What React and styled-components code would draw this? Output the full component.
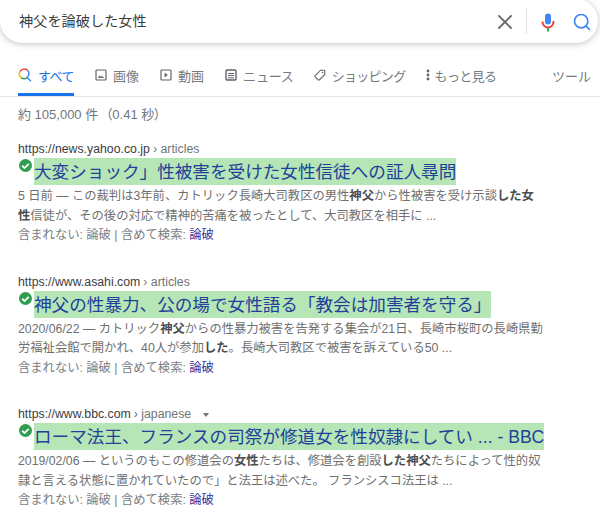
import styled, { createGlobalStyle } from 'styled-components'
import { Search, X } from 'lucide-react'

const GlobalStyle = createGlobalStyle`
  html, body {
    margin: 0;
    padding: 0;
    background: #fff;
    overflow: hidden;
  }
  body {
    font-family: 'Liberation Sans', 'Noto Sans CJK JP', sans-serif;
  }
`

const Page = styled.div`
  width: 600px;
  height: 531px;
  overflow: hidden;
`

const SearchBar = styled.div`
  height: 44px;
  width: 598px;
  margin-top: -1px;
  box-sizing: border-box;
  display: flex;
  align-items: center;
  padding: 0 6px 0 19px;
  border-radius: 0 22px 22px 22px;
  background: #fff;
  box-shadow: 0 1px 6px rgba(32, 33, 36, 0.28);
`

const Query = styled.div`
  flex: 1;
  font-size: 14.2px;
  color: #3c3c3c;
  padding-bottom: 2px;
`

const ClearButton = styled.div`
  display: flex;
  color: #666a6e;
  margin: 2px 9px 0 0;
`

const Divider = styled.div`
  width: 1px;
  height: 26px;
  background: #dfe1e5;
  margin-right: 14px;
`

const MicIcon = styled.svg`
  width: 14px;
  height: 19px;
  margin: 2px 17px 0 0;
`

const SearchIcon = styled(Search)`
  margin-top: 2px;
`

const TabBar = styled.div`
  height: 54px;
  box-sizing: border-box;
  display: flex;
  border-bottom: 1px solid #e6e6e6;
  padding: 0 9px 0 18px;
`

const Tab = styled.div`
  height: 100%;
  box-sizing: border-box;
  display: flex;
  align-items: center;
  gap: ${p => p.$gap || 6}px;
  margin-right: ${p => p.$space || 0}px;
  margin-left: ${p => (p.$push ? 'auto' : 0)};
  font-size: 13px;
  letter-spacing: ${p => p.$tight || 0}px;
  color: ${p => (p.$active ? '#1a73e8' : '#777b80')};
  padding-top: 14px;
  border-bottom: 3px solid ${p => (p.$active ? '#1a73e8' : 'transparent')};
  margin-bottom: -1px;
  white-space: nowrap;
`

const TabIcon = styled.svg`
  width: ${p => p.$size || 12}px;
  height: ${p => p.$size || 12}px;
  flex: none;
`

const MoreDots = styled.svg`
  width: 4px;
  height: 12px;
  flex: none;
`

const Stats = styled.div`
  margin: 10px 0 0 18px;
  font-size: 13px;
  line-height: 16px;
  color: #70757a;
`

const Timing = styled.span`
  font-feature-settings: 'palt';
  margin-left: 4px;
`

const ResultList = styled.div`
  margin: 19px 0 0 18px;
  display: flex;
  flex-direction: column;
  gap: 29px;
`

const Result = styled.div`
  width: 530px;
`

const UrlLine = styled.div`
  height: 16px;
  font-size: 12.3px;
  line-height: 15px;
  color: #3c4043;
  display: flex;
  align-items: flex-start;
  gap: 3px;
`

const Crumb = styled.span`
  color: #70757a;
`

const Caret = styled.span`
  width: 0;
  height: 0;
  margin: 6px 0 0 9px;
  border-left: 3.5px solid transparent;
  border-right: 3.5px solid transparent;
  border-top: 4px solid #70757a;
`

const TitleRow = styled.div`
  position: relative;
  display: flex;
  padding-left: 16px;
`

const Check = styled.svg`
  position: absolute;
  left: 1px;
  top: 1px;
  width: 13px;
  height: 13px;
`

const Title = styled.div`
  height: 27px;
  line-height: 28px;
  background: #b6e6b6;
  color: #22409a;
  font-size: 17.6px;
  white-space: nowrap;
`

const Snippet = styled.div`
  margin-top: 2px;
  font-size: 12.3px;
  line-height: 19.5px;
  color: #6f6f6f;
  white-space: nowrap;

  b {
    color: #4a4d52;
  }
`

const Missing = styled.div`
  font-size: 12.3px;
  line-height: 19.5px;
  color: #7a7e83;
  white-space: nowrap;

  a {
    color: #33309a;
  }
`

const Tick = () => (
  <Check viewBox="0 0 24 24">
    <circle cx="12" cy="12" r="12" fill="#2f9e4f" />
    <path d="M6 12.5l4.2 4.2L18 9" fill="none" stroke="#fff" strokeWidth="3.4" />
  </Check>
)

const Terms = () => (
  <Missing>含まれない: 論破 | 含めて検索: <a>論破</a></Missing>
)

const results = [
  {
    url: 'https://news.yahoo.co.jp',
    title: '大変ショック」性被害を受けた女性信徒への証人尋問',
    lines: [
      <>5 日前 — この裁判は3年前、カトリック長崎大司教区の男性<b>神父</b>から性被害を受け示談<b>した女</b></>,
      <><b>性</b>信徒が、その後の対応で精神的苦痛を被ったとして、大司教区を相手に ...</>,
    ],
  },
  {
    url: 'https://www.asahi.com',
    title: '神父の性暴力、公の場で女性語る「教会は加害者を守る」',
    lines: [
      <>2020/06/22 — カトリック<b>神父</b>からの性暴力被害を告発する集会が21日、長崎市桜町の長崎県勤</>,
      <>労福祉会館で開かれ、40人が参加<b>した</b>。長崎大司教区で被害を訴えている50 ...</>,
    ],
  },
  {
    url: 'https://www.bbc.com',
    crumb: 'japanese',
    caret: true,
    title: 'ローマ法王、フランスの司祭が修道女を性奴隷にしてい ... - BBC',
    lines: [
      <>2019/02/06 — というのもこの修道会の<b>女性</b>たちは、修道会を創設<b>した神父</b>たちによって性的奴</>,
      <>隷と言える状態に置かれていたので」と法王は述べた。 フランシスコ法王は ...</>,
    ],
  },
]

const App = () => {
  return (
    <Page>
      <GlobalStyle />
      <SearchBar>
        <Query>神父を論破した女性</Query>
        <ClearButton><X size={24} strokeWidth={1.8} /></ClearButton>
        <Divider />
        <MicIcon viewBox="0 0 14 19">
          <rect x="4" y="0.5" width="6" height="11" rx="3" fill="#4285f4" />
          <path d="M1.5 8v1" fill="none" stroke="#fbbc04" strokeWidth="2" />
          <path d="M1.5 9a5.5 5.5 0 0 0 11 0V8" fill="none" stroke="#ea4335" strokeWidth="2" />
          <path d="M7 15v3.5" stroke="#34a853" strokeWidth="2" />
        </MicIcon>
        <SearchIcon size={20} color="#4285f4" strokeWidth={2} />
      </SearchBar>
      <TabBar>
        <Tab $active $space={21} $gap={6} $tight={-0.5}>
          <TabIcon $size={14} viewBox="0 0 14 14" fill="none" strokeWidth="1.5">
            <path d="M9.5 2.2A5 5 0 0 0 2 3.5" stroke="#ea4335" />
            <path d="M2 3.5A5 5 0 0 0 3 9.6" stroke="#fbbc04" />
            <path d="M3 9.6A5 5 0 0 0 9 9.7" stroke="#34a853" />
            <path d="M9 9.7A5 5 0 0 0 9.5 2.2M9 9.5L13 13.2" stroke="#4285f4" />
          </TabIcon>
          すべて
        </Tab>
        <Tab $space={21}>
          <TabIcon viewBox="0 0 12 12" fill="none" stroke="#5f6368">
            <rect x="1" y="1" width="10" height="10" rx="1" strokeWidth="1.2" />
            <path d="M3 8.7l1.7-2 1.2 1.2 .9-.8 2 1.6z" fill="#5f6368" strokeWidth="0.4" />
          </TabIcon>
          画像
        </Tab>
        <Tab $space={21}>
          <TabIcon viewBox="0 0 12 12" fill="none" stroke="#5f6368">
            <rect x="1" y="1" width="10" height="10" rx="1" strokeWidth="1.2" />
            <path d="M4.8 4l2.8 2-2.8 2z" fill="#5f6368" strokeWidth="0.4" />
          </TabIcon>
          動画
        </Tab>
        <Tab $space={20} $tight={-0.2}>
          <TabIcon viewBox="0 0 12 12" fill="none" stroke="#5f6368">
            <rect x="1" y="1" width="10" height="10" rx="1" strokeWidth="1.4" />
            <path d="M3 4.5h6M3 6.5h6M3 8.8h6" strokeWidth="1" />
          </TabIcon>
          ニュース
        </Tab>
        <Tab $space={21} $tight={-0.7}>
          <TabIcon viewBox="0 0 12 12" fill="none" stroke="#5f6368">
            <path d="M6.6 1.2h3.4a.8.8 0 0 1 .8.8v3.4L5.4 10.8a.9.9 0 0 1-1.2 0L1.2 7.8a.9.9 0 0 1 0-1.2z" strokeWidth="1.1" />
            <circle cx="8.5" cy="3.5" r="0.8" fill="#5f6368" strokeWidth="0" />
          </TabIcon>
          ショッピング
        </Tab>
        <Tab $gap={4} $tight={-0.6}>
          <MoreDots viewBox="0 0 4 12" fill="#5f6368">
            <circle cx="2" cy="2" r="1.4" />
            <circle cx="2" cy="6" r="1.4" />
            <circle cx="2" cy="10" r="1.4" />
          </MoreDots>
          もっと見る
        </Tab>
        <Tab $push>ツール</Tab>
      </TabBar>
      <Stats>約 105,000 件 <Timing>（0.41 秒）</Timing></Stats>
      <ResultList>
        {results.map(r => (
          <Result key={r.url}>
            <UrlLine>
              {r.url}
              <Crumb>› {r.crumb || 'articles'}</Crumb>
              {r.caret && <Caret />}
            </UrlLine>
            <TitleRow>
              <Tick />
              <Title>{r.title}</Title>
            </TitleRow>
            <Snippet>
              {r.lines.map((line, i) => <div key={i}>{line}</div>)}
            </Snippet>
            <Terms />
          </Result>
        ))}
      </ResultList>
    </Page>
  )
}

export default App
